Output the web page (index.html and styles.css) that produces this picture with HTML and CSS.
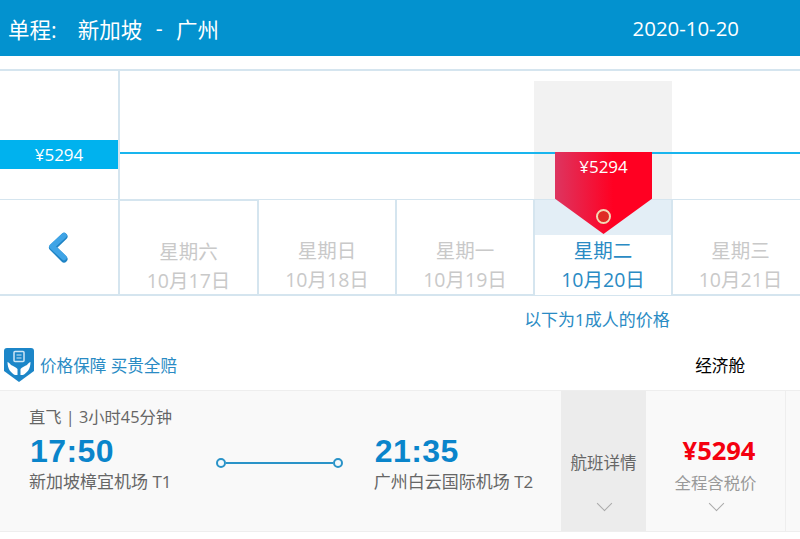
FILE: index.html
```html
<!DOCTYPE html>
<html lang="zh-CN">
<head>
    <meta charset="UTF-8">
    <title>单程 新加坡 - 广州</title>
    <link rel="stylesheet" href="styles.css">
</head>
<body>
    <header class="top-bar">
        <div class="route">
            <span>单程:</span>
            <span>新加坡</span>
            <span class="route-dash">-</span>
            <span>广州</span>
        </div>
        <div class="top-date">2020-10-20</div>
    </header>

    <!-- Price chart -->
    <section class="chart">
        <div class="chart-axis">
            <div class="axis-price">¥5294</div>
        </div>
        <div class="chart-plot"></div>
        <div class="chart-selected"></div>
        <div class="chart-line"></div>
        <div class="pin">
            <span class="pin-price">¥5294</span>
            <span class="pin-dot"></span>
        </div>
    </section>

    <nav class="days">
        <div class="day-prev">
            <svg width="24" height="32" viewBox="0 0 24 32">
                <path d="M18 4.5 L6.5 15.5 L18 27" fill="none" stroke="#1f83c4" stroke-width="7" stroke-linecap="round" stroke-linejoin="round"/>
                <path d="M18 3.5 L6 14.5 L18 25.5" fill="none" stroke="#3fa4e6" stroke-width="5.5" stroke-linecap="round" stroke-linejoin="round"/>
            </svg>
        </div>
        <div class="day"><p>星期六</p><p>10月17日</p></div>
        <div class="day"><p>星期日</p><p>10月18日</p></div>
        <div class="day"><p>星期一</p><p>10月19日</p></div>
        <div class="day day-active"><p>星期二</p><p>10月20日</p></div>
        <div class="day"><p>星期三</p><p>10月21日</p></div>
    </nav>

    <div class="price-note">以下为1成人的价格</div>

    <div class="promise-row">
        <div class="promise">
            <svg class="shield" width="30" height="34" viewBox="0 0 30 34">
                <path d="M3 0 H27 Q30 0 30 3 V23 L15 34 L0 23 V3 Q0 0 3 0 Z" fill="#1c86c8"/>
                <rect x="10" y="3.5" width="10" height="10" rx="1" fill="none" stroke="#cfe6f5" stroke-width="1.5"/>
                <path d="M12.5 7 H17.5 M12.5 10 H17.5" stroke="#cfe6f5" stroke-width="1.2"/>
                <path d="M3.5 14 C5 14.5 6 15.5 7 17 C9 18 12 19 13.5 21 V27 H11 C7 25 3.5 21 3.5 14 Z M26.5 14 C25 14.5 24 15.5 23 17 C21 18 18 19 16.5 21 V27 H19 C23 25 26.5 21 26.5 14 Z" fill="#fff"/>
            </svg>
            <span>价格保障 买贵全赔</span>
        </div>
        <div class="cabin">经济舱</div>
    </div>

    <article class="flight">
        <div class="flight-info">
            <div class="flight-meta">直飞 | 3小时45分钟</div>
            <div class="flight-times">
                <div class="stop">
                    <div class="stop-time">17:50</div>
                    <div class="stop-airport">新加坡樟宜机场 T1</div>
                </div>
                <div class="flight-link">
                    <span class="link-end"></span>
                    <span class="link-bar"></span>
                    <span class="link-end"></span>
                </div>
                <div class="stop">
                    <div class="stop-time">21:35</div>
                    <div class="stop-airport">广州白云国际机场 T2</div>
                </div>
            </div>
        </div>
        <div class="flight-detail">
            <span>航班详情</span>
            <i class="chevron"></i>
        </div>
        <div class="flight-price">
            <div class="price-value">¥5294</div>
            <div class="price-label">全程含税价</div>
            <i class="chevron"></i>
        </div>
    </article>
</body>
</html>
```

FILE: styles.css
```css
* {
    box-sizing: border-box;
}
body {
    margin: 0;
    width: 800px;
    height: 539px;
    overflow: hidden;
    background: #fff;
    font-family: "Open Sans", "Noto Sans CJK SC", sans-serif;
}
p {
    margin: 0;
}
.top-bar {
    height: 56px;
    background-color: #0392cf;
    color: #fff;
    display: flex;
    align-items: center;
    justify-content: space-between;
    padding: 0 61px 0 8px;
}
.route {
    display: flex;
    gap: 21px;
    font-size: 21.5px;
}
.route-dash {
    margin: 0 -7.5px;
}
.top-date {
    font-size: 20.4px;
}

/* Chart */
.chart {
    position: relative;
    margin-top: 13px;
    height: 130px;
    border-top: 2px solid #d5e5ef;
    display: flex;
}
.chart-axis {
    width: 120px;
    border-right: 2px solid #d5e5ef;
    padding-top: 69px;
}
.axis-price {
    height: 29px;
    line-height: 29px;
    width: 118px;
    background-color: #00b2ee;
    color: #fff;
    text-align: center;
    font-size: 17px;
}
.chart-plot {
    flex: 1;
}
.chart-line {
    position: absolute;
    left: 120px;
    right: 0;
    top: 81px;
    height: 2px;
    background-color: #19b5ee;
}
.chart-selected {
    position: absolute;
    left: 534px;
    top: 10px;
    bottom: 0;
    width: 138px;
    background-color: #f2f2f2;
}
.pin {
    position: absolute;
    z-index: 2;
    left: 555px;
    top: 81px;
    width: 97px;
    height: 82px;
    background: linear-gradient(90deg, #dd3560, #ff0022 60%);
    clip-path: polygon(0 0, 100% 0, 100% 57%, 50% 100%, 0 57%);
    color: #fff;
    text-align: center;
    font-size: 17px;
}
.pin-price {
    display: block;
    padding-top: 3px;
}
.pin-dot {
    position: absolute;
    left: 41px;
    top: 57px;
    width: 15px;
    height: 15px;
    border-radius: 50%;
    background-color: #df2c25;
    border: 2px solid #f2d9b5;
}

/* Day strip */
.days {
    display: grid;
    grid-template-columns: 120px 139px 138px 138px 138px 135px;
    height: 97px;
    border-top: 1px solid #d5e5ef;
    border-bottom: 2px solid #d5e5ef;
}
.day-prev {
    border-right: 2px solid #d5e5ef;
    display: flex;
    align-items: center;
    justify-content: center;
    padding-right: 2px;
}
.day {
    border-right: 2px solid #d5e5ef;
    text-align: center;
    color: #c9c9c9;
    font-size: 19.5px;
    line-height: 29px;
    padding-top: 36px;
}
.day-prev + .day {
    border-top: 1px solid #d5e5ef;
}
.day:last-child {
    border-right: none;
}
.day-active {
    color: #2a8bc4;
    background: linear-gradient(#e3eef6 35px, #fff 35px);
}

.price-note {
    text-align: center;
    margin: 13px 0 0 394px;
    color: #2a8bc4;
    font-size: 17px;
    line-height: 22px;
    width: 406px;
}
.promise-row {
    display: flex;
    justify-content: space-between;
    align-items: center;
    height: 35px;
    margin-top: 16px;
    padding: 0 55px 0 4px;
}
.promise {
    display: flex;
    align-items: center;
    gap: 6px;
    color: #2a8bc4;
    font-size: 16.6px;
}
.cabin {
    color: #000;
    font-size: 16.6px;
}

/* Flight card */
.flight {
    display: flex;
    height: 142px;
    margin-top: 8px;
    background-color: #f9f9f9;
    border-top: 1px solid #eee;
    border-bottom: 1px solid #eee;
}
.flight-info {
    width: 561px;
    padding: 14px 0 0 30px;
}
.flight-meta {
    margin-left: -1px;
    color: #666;
    font-size: 16.3px;
    line-height: 24px;
}
.flight-times {
    display: flex;
    align-items: center;
}
.stop {
    width: 187px;
}
.stop-time {
    color: #0a85cb;
    font-family: "Liberation Sans", sans-serif;
    font-weight: 700;
    font-size: 32px;
    letter-spacing: 0.4px;
    line-height: 38px;
    padding-top: 3px;
    box-sizing: content-box;
}
.stop-airport {
    margin-left: -1px;
    color: #666;
    font-size: 17px;
    line-height: 24px;
}
.flight-link {
    width: 127px;
    margin-right: 32px;
    padding-top: 2px;
    display: flex;
    align-items: center;
}
.link-end {
    width: 10px;
    height: 10px;
    border: 2px solid #2a93c8;
    border-radius: 50%;
    background-color: #f4f9fc;
}
.link-bar {
    flex: 1;
    height: 2px;
    background-color: #2a93c8;
}
.flight-detail {
    width: 85px;
    background-color: #ececec;
    color: #666;
    font-size: 16.5px;
    text-align: center;
    padding-top: 59px;
    position: relative;
}
.flight-price {
    width: 140px;
    text-align: center;
    border-right: 1px solid #eee;
    position: relative;
    padding-top: 41px;
}
.price-value {
    padding-left: 7px;
    color: #f4000f;
    font-size: 25.5px;
    font-weight: 700;
    line-height: 36px;
}
.price-label {
    color: #999;
    font-size: 16.4px;
    line-height: 26px;
    margin-top: 2px;
}
.chevron {
    position: absolute;
    left: 50%;
    bottom: 22px;
    width: 11px;
    height: 11px;
    margin-left: -5px;
    border-right: 1px solid #aaa;
    border-bottom: 1px solid #aaa;
    transform: rotate(45deg);
}
```
